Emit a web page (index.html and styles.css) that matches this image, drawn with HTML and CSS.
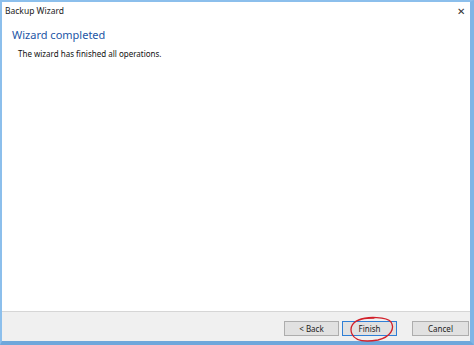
FILE: index.html
```html
<!DOCTYPE html>
<html lang="en">
<head>
    <meta charset="UTF-8">
    <meta name="viewport" content="width=device-width, initial-scale=1.0">
    <title>Backup Wizard</title>
    <link rel="stylesheet" href="styles.css">
</head>
<body>
    <div class="window">
        <div class="title-bar">
            <span class="title">Backup Wizard</span>
            <span class="close">&#x2715;</span>
        </div>

        <div class="content">
            <h1>Wizard completed</h1>
            <p>The wizard has finished all operations.</p>
        </div>

        <div class="footer">
            <button class="btn">&lt; Back</button>
            <div class="finish-wrap">
                <button class="btn btn-default">Finish</button>
                <!-- red pen mark drawn over the screenshot -->
                <svg class="scribble" width="46" height="27" viewBox="0 0 46 27">
                    <path d="M9 4 C 19 0, 38 1, 42 6 C 46 12, 42 21, 29 24 C 17 26, 6 25, 3 18 C 0 11, 4 5, 13 3 C 17 2, 21 2, 25 2"
                          fill="none" stroke="#d2202a" stroke-width="1.3" stroke-linecap="round"/>
                </svg>
            </div>
            <button class="btn btn-cancel">Cancel</button>
        </div>
    </div>
</body>
</html>
```

FILE: styles.css
```css
body {
    margin: 0;
    padding: 0;
    font-family: "Noto Sans", "Open Sans", Arial, sans-serif;
    background-color: #fff;
}

.window {
    box-sizing: border-box;
    width: 474px;
    height: 345px;
    display: flex;
    flex-direction: column;
    border-left: 2px solid #8cbfec;
    border-top: 2px solid #8cbfec;
    border-right: 4px solid #7fb5e6;
    border-bottom: 4px solid #6fa7db;
    background-color: #fff;
}

.title-bar {
    height: 17px;
    display: flex;
    align-items: center;
    justify-content: space-between;
    padding: 0 5px 0 3px;
}

.title {
    font-size: 8.5px;
    color: #222;
}

.close {
    font-size: 10px;
    color: #333;
}

.content {
    flex: 1;
    padding: 8px 0 0 10px;
}

.content h1 {
    margin: 0;
    font-size: 11px;
    font-weight: normal;
    color: #2356a6;
}

.content p {
    margin: 6px 0 0 6px;
    font-size: 8px;
    color: #111;
}

.footer {
    height: 30px;
    border-top: 1px solid #d6d6d6;
    background-color: #f0f0f0;
    display: flex;
    align-items: flex-start;
    justify-content: flex-end;
    padding: 9px 1px 0 0;
    box-sizing: border-box;
}

.btn {
    width: 55px;
    height: 15px;
    padding: 0;
    font-family: inherit;
    font-size: 8px;
    color: #222;
    background-color: #e1e1e1;
    border: 1px solid #adadad;
    border-radius: 0;
}

.finish-wrap {
    position: relative;
    display: flex;
    margin-left: 3px;
}

.btn-default {
    border: 1px solid #2f7fd6;
}

.btn-cancel {
    width: 57px;
    margin-left: 15px;
}

.scribble {
    position: absolute;
    left: 7px;
    top: -5px;
}
```
